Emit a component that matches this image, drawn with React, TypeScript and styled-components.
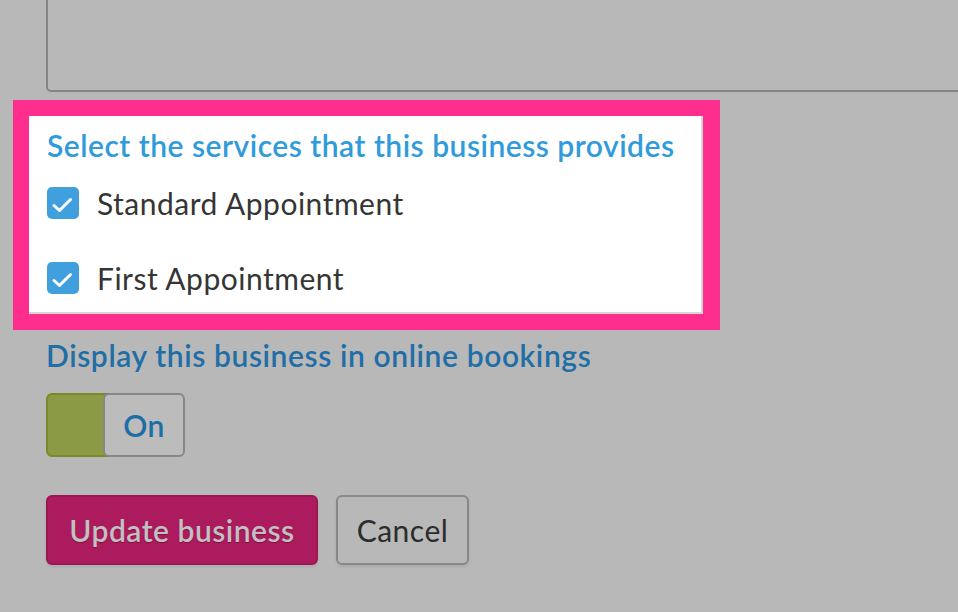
import React from "react";
import styled, { createGlobalStyle } from "styled-components";

const Global = createGlobalStyle`
  html, body {
    margin: 0;
    padding: 0;
    background: #b8b8b8;
    overflow: hidden;
  }
  body {
    font-family: Lato, "Open Sans", sans-serif;
    letter-spacing: 0.5px;
  }
`;

const Page = styled.div`
  width: 958px;
  height: 612px;
  overflow: hidden;
  padding-left: 46px;
  box-sizing: border-box;
`;

const TextArea = styled.div`
  margin-top: -30px;
  height: 122px;
  width: 1000px;
  box-sizing: border-box;
  border: 2px solid #858585;
  border-radius: 5px;
  background: #b8b8b8;
`;

const Highlight = styled.div`
  margin-top: 8px;
  margin-left: -33px;
  width: 707px;
  box-sizing: border-box;
  border: 16px solid #fe2e8e;
  border-right-width: 17px;
`;

const Panel = styled.div`
  background: #ffffff;
  box-shadow: inset -2px -2px 0 #d6d6d6;
  padding: 12px 18px 0 18px;
  height: 198px;
  box-sizing: border-box;
  display: flex;
  flex-direction: column;
`;

const Heading = styled.div<{ $tone?: "bright" | "dim" }>`
  font-size: 30px;
  font-weight: 600;
  line-height: 34px;
  letter-spacing: ${(p) => (p.$tone === "dim" ? "0.6px" : "0.5px")};
  color: ${(p) => (p.$tone === "dim" ? "#1f6ea6" : "#2f9bdb")};
  white-space: nowrap;
`;

const Options = styled.div`
  display: flex;
  flex-direction: column;
  gap: 43px;
  margin-top: 25px;
`;

const Option = styled.label`
  display: flex;
  align-items: center;
  gap: 18px;
  height: 32px;
  font-size: 30px;
  color: #353535;
  white-space: nowrap;
`;

const Box = styled.span`
  width: 32px;
  height: 32px;
  flex: 0 0 32px;
  border-radius: 5px;
  background: #40a0de;
  display: flex;
  align-items: center;
  justify-content: center;
`;

const Section = styled.div`
  margin-top: 8px;
`;

const Toggle = styled.div`
  margin-top: 21px;
  width: 139px;
  height: 64px;
  display: flex;
  box-sizing: border-box;
`;

const ToggleTrack = styled.div`
  width: 64px;
  height: 64px;
  box-sizing: border-box;
  background: #8a9a45;
  border: 2px solid #7a8a2a;
  border-radius: 6px 0 0 6px;
  margin-right: -7px;
`;

const ToggleKnob = styled.div`
  flex: 1;
  height: 64px;
  box-sizing: border-box;
  border: 2px solid #878787;
  border-radius: 6px;
  background: #bcbcbc;
  display: flex;
  align-items: center;
  justify-content: center;
  font-size: 30px;
  font-weight: 600;
  color: #1d6ea6;
  position: relative;
`;

const Actions = styled.div`
  margin-top: 38px;
  display: flex;
  gap: 18px;
`;

const Button = styled.button<{ $primary?: boolean }>`
  height: 70px;
  box-sizing: border-box;
  border-radius: 6px;
  font-family: Lato, "Open Sans", sans-serif;
  font-size: 30px;
  letter-spacing: 0.5px;
  font-weight: ${(p) => (p.$primary ? 600 : 400)};
  padding: 0;
  width: ${(p) => (p.$primary ? "272px" : "133px")};
  background: ${(p) => (p.$primary ? "#ad1b5f" : "transparent")};
  color: ${(p) => (p.$primary ? "#c3c0c2" : "#2c2c2c")};
  border: 2px solid ${(p) => (p.$primary ? "#9c1654" : "#888888")};
  text-shadow: ${(p) => (p.$primary ? "0 1px 1px rgba(90,0,40,0.5)" : "none")};
  box-shadow: 0 2px 3px rgba(0, 0, 0, 0.08);
`;

const Check = () => (
  <svg width="32" height="32" viewBox="0 0 32 32">
    <polyline
      points="7,18.5 12.5,23.5 23.5,12.5"
      fill="none"
      stroke="#ffffff"
      strokeWidth="3"
      strokeLinecap="round"
      strokeLinejoin="round"
    />
  </svg>
);

export default function App() {
  return (
    <>
      <Global />
      <Page>
        <TextArea />
        <Highlight>
          <Panel>
            <Heading>Select the services that this business provides</Heading>
            <Options>
              <Option>
                <Box>
                  <Check />
                </Box>
                Standard Appointment
              </Option>
              <Option>
                <Box>
                  <Check />
                </Box>
                First Appointment
              </Option>
            </Options>
          </Panel>
        </Highlight>
        <Section>
          <Heading $tone="dim">Display this business in online bookings</Heading>
          <Toggle>
            <ToggleTrack />
            <ToggleKnob>On</ToggleKnob>
          </Toggle>
        </Section>
        <Actions>
          <Button $primary>Update business</Button>
          <Button>Cancel</Button>
        </Actions>
      </Page>
    </>
  );
}
